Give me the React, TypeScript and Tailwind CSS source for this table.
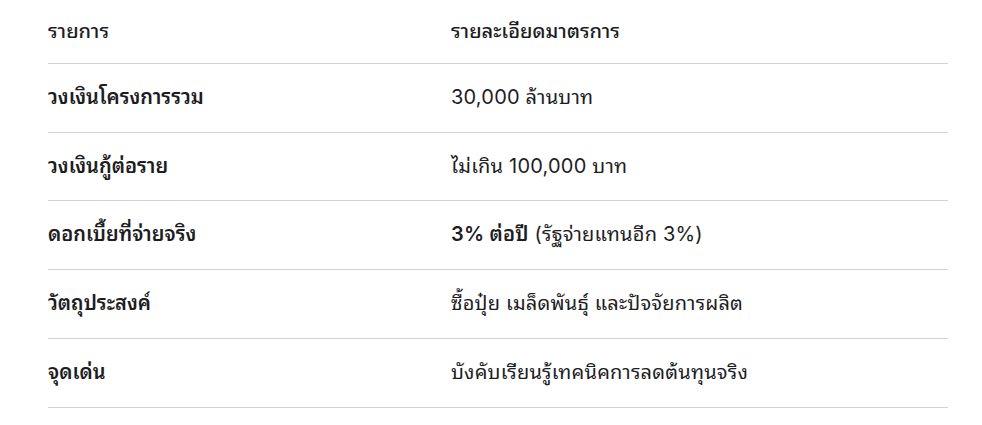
import React from 'react';

const ROWS: { label: string; detail: React.ReactNode }[] = [
  { label: 'วงเงินโครงการรวม', detail: '30,000 ล้านบาท' },
  { label: 'วงเงินกู้ต่อราย', detail: 'ไม่เกิน 100,000 บาท' },
  {
    label: 'ดอกเบี้ยที่จ่ายจริง',
    detail: (
      <>
        <span className="font-semibold">3% ต่อปี</span> (รัฐจ่ายแทนอีก 3%)
      </>
    ),
  },
  { label: 'วัตถุประสงค์', detail: 'ซื้อปุ๋ย เมล็ดพันธุ์ และปัจจัยการผลิต' },
  { label: 'จุดเด่น', detail: 'บังคับเรียนรู้เทคนิคการลดต้นทุนจริง' },
];

export default function App() {
  return (
    <div className="min-h-screen bg-white font-['Inter','Noto_Sans_Thai_Looped',sans-serif] text-[#1d1d1f]">
      <table className="ml-[48px] w-[900px] border-collapse text-left text-[20px] leading-[27.7px]">
        <thead>
          <tr className="border-b border-[#d2d2d7]">
            <th className="w-[403px] pt-[18px] pb-[17.3px] font-medium">รายการ</th>
            <th className="pt-[18px] pb-[17.3px] font-medium">รายละเอียดมาตรการ</th>
          </tr>
        </thead>
        <tbody>
          {ROWS.map(row => (
            <tr key={row.label} className="border-b border-[#d2d2d7]">
              <td className="py-5 font-semibold">{row.label}</td>
              <td className="py-5 tracking-[0.2px]">{row.detail}</td>
            </tr>
          ))}
        </tbody>
      </table>
    </div>
  );
}
